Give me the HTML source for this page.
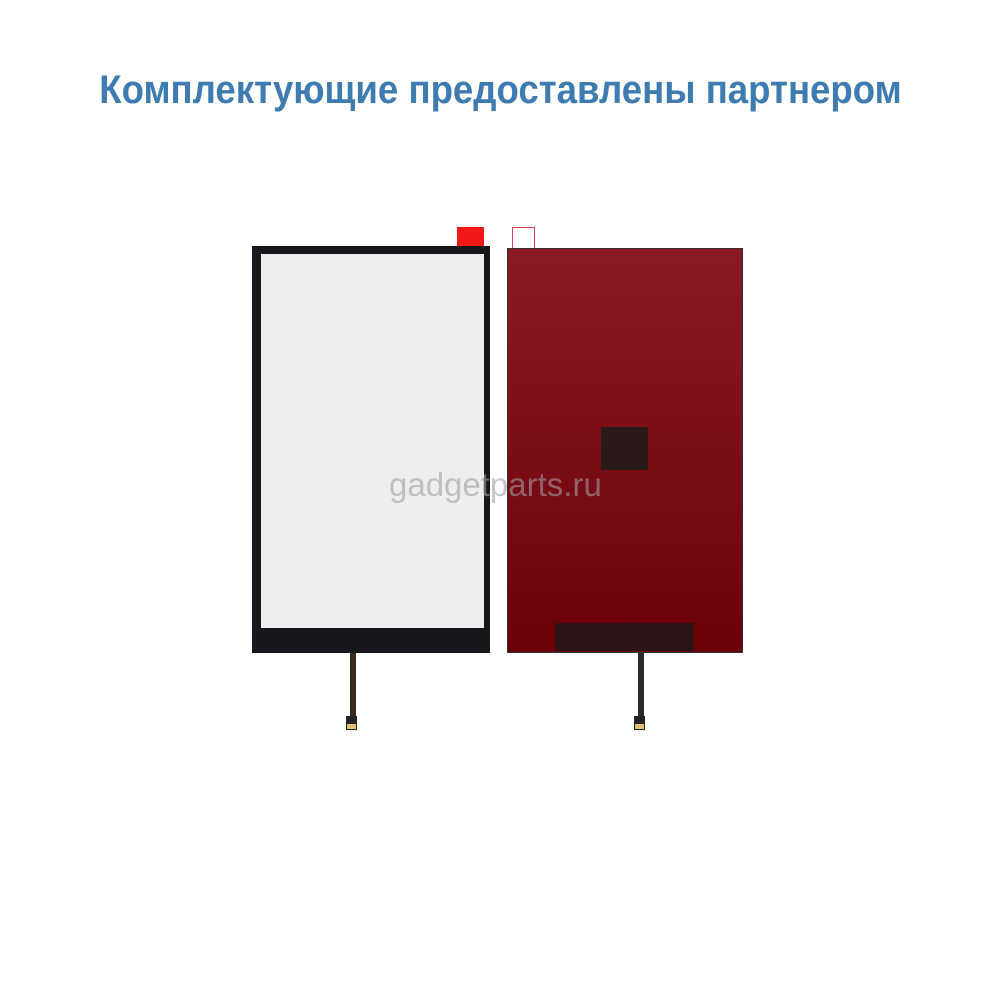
<!DOCTYPE html>
<html><head><meta charset="utf-8"><style>
body{margin:0;width:1000px;height:1000px;background:#fff;position:relative;overflow:hidden}
.a{position:absolute}
h1{position:absolute;left:0;top:68px;width:1000px;margin:0;text-align:center;font:bold 40px "Liberation Sans",sans-serif;color:#3d7bb1;white-space:nowrap}
h1 span{display:inline-block;transform:scaleX(0.915);transform-origin:center}
</style></head><body>
<h1><span>Комплектующие предоставлены партнером</span></h1>
<div class="a" style="left:457px;top:227px;width:27px;height:20px;background:#f21818"></div>
<div class="a" style="left:252px;top:246px;width:238px;height:407px;background:#15171c"></div>
<div class="a" style="left:261px;top:254px;width:223px;height:374px;background:#eceef0"></div>
<div class="a" style="left:350px;top:653px;width:6px;height:65px;background:#3a2b20"></div>
<div class="a" style="left:346px;top:716px;width:11px;height:14px;background:#222"></div>
<div class="a" style="left:347px;top:724px;width:9px;height:5px;background:#e0c070"></div>
<div class="a" style="left:512px;top:227px;width:23px;height:22px;background:#fff;border:1px solid #e04050;box-sizing:border-box"></div>
<div class="a" style="left:507px;top:248px;width:236px;height:405px;background:linear-gradient(#8a1a22,#6c0008);border:1px solid #333;box-sizing:border-box"></div>
<div class="a" style="left:601px;top:427px;width:47px;height:43px;background:#2a1a1a"></div>
<div class="a" style="left:555px;top:623px;width:139px;height:28px;background:#2a1416"></div>
<div class="a" style="left:638px;top:653px;width:6px;height:65px;background:#2a2a2a"></div>
<div class="a" style="left:634px;top:716px;width:11px;height:14px;background:#222"></div>
<div class="a" style="left:635px;top:724px;width:9px;height:5px;background:#e0c070"></div>
<div class="a" style="left:389px;top:466px;font:33px 'Liberation Sans',sans-serif;color:rgba(160,160,160,0.6)">gadgetparts.ru</div>
</body></html>
